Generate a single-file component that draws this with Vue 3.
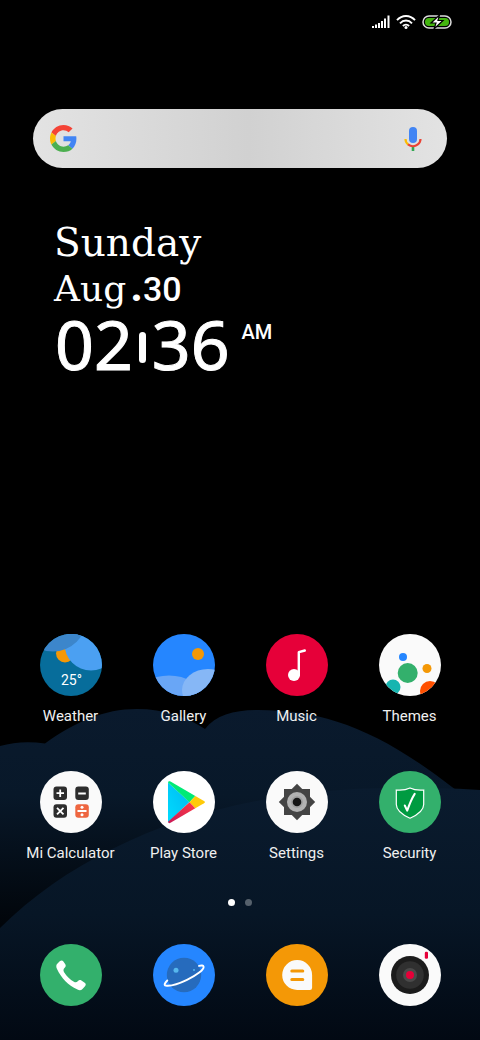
<script setup>
import { ref } from 'vue'

const query = ref('')
const page = ref(0)
const pages = [0, 1]
</script>

<template>
  <div class="home">
    <svg class="wallpaper" viewBox="0 700 480 340" preserveAspectRatio="none" aria-hidden="true">
      <defs>
        <linearGradient id="hill-back" gradientUnits="userSpaceOnUse" x1="0" y1="709" x2="0" y2="925">
          <stop offset="0" stop-color="#0a1a2d" />
          <stop offset="0.4" stop-color="#081829" />
          <stop offset="1" stop-color="#01050a" />
        </linearGradient>
        <linearGradient id="hill-front" gradientUnits="userSpaceOnUse" x1="0" y1="788" x2="0" y2="1040">
          <stop offset="0" stop-color="#0a1b2e" />
          <stop offset="0.5" stop-color="#071626" />
          <stop offset="1" stop-color="#020913" />
        </linearGradient>
      </defs>
      <path
        d="M0 746C14 742 29 741 45 743.500C75 722 104 709 137 709C164 709 187 717 205 729C216 715 234 710 258 710C322 710 376 728 452 787L470 800V1040H0Z"
        fill="url(#hill-back)"
      />
      <path d="M0 928C90 839 230 788 395 788C424 788 452 788 480 790V1040H0Z" fill="url(#hill-front)" />
    </svg>

    <header class="status">
      <svg width="18" height="14" viewBox="0 0 18 14" fill="#fff" aria-label="Signal">
        <path d="M0 11h2v2H0zM3 9.500h2V13H3zM6 8h2v5H6zM9 6h2v7H9zM12 3.500h2V13h-2zM15.500 .5h2V13h-2z" />
      </svg>
      <svg width="20" height="14" viewBox="0 0 20 14" fill="none" stroke="#fff" stroke-width="1.900" aria-label="Wi-Fi">
        <path d="M1 5.200C6-.4 14-.4 19 5.200M4 8.300c3.400-3.700 8.600-3.700 12 0M6.900 11c1.800-1.900 4.400-1.900 6.200 0" />
        <circle cx="10" cy="12.400" r="1.500" fill="#fff" stroke="none" />
      </svg>
      <svg width="30" height="14" viewBox="0 0 30 14" aria-label="Battery charging">
        <rect x="1" y="1" width="28" height="12" rx="6" fill="#000" stroke="#ddd" stroke-width="1.500" />
        <rect x="3" y="3" width="24" height="8" rx="4" fill="#43b50f" />
        <path d="M17.500 0L9 8h5l-2 6 9-8.500h-5z" fill="#fff" stroke="#000" stroke-width="1.200" />
      </svg>
    </header>

    <form class="search" role="search" @submit.prevent>
      <svg width="27" height="27" viewBox="0 0 48 48" aria-hidden="true">
        <path fill="#f44336" d="M24 9.500c3.540 0 6.710 1.220 9.210 3.600l6.850-6.850C35.900 2.380 30.470 0 24 0 14.620 0 6.510 5.380 2.560 13.220l7.980 6.190C12.430 13.720 17.740 9.500 24 9.500z" />
        <path fill="#4285f4" d="M46.980 24.550c0-1.570-.15-3.090-.38-4.550H24v9.020h12.940c-.58 2.960-2.260 5.480-4.780 7.180l7.730 6c4.510-4.180 7.090-10.360 7.090-17.650z" />
        <path fill="#fbbc05" d="M10.530 28.590c-.48-1.450-.76-2.990-.76-4.590s.27-3.140.76-4.590l-7.980-6.190C.92 16.460 0 20.120 0 24s.92 7.540 2.560 10.780l7.970-6.190z" />
        <path fill="#4caf50" d="M24 48c6.480 0 11.930-2.130 15.890-5.810l-7.730-6c-2.150 1.450-4.920 2.300-8.160 2.300-6.260 0-11.570-4.220-13.470-9.910l-7.980 6.190C6.510 42.620 14.620 48 24 48z" />
      </svg>
      <input v-model="query" type="text" aria-label="Search" />
      <button type="button" aria-label="Voice search">
        <svg width="18" height="26" viewBox="0 0 18 26" fill="none" stroke-width="2.200">
          <rect x="5" y="1" width="8" height="16" rx="4" fill="#4285f4" />
          <path d="M9 21v4" stroke="#34a853" stroke-width="2.600" />
          <path d="M1.500 13c0 2.400 1.100 4.300 2.700 5.500" stroke="#fbbc05" />
          <path d="M4 18.400c3 2.300 7 2.300 9.800 0 1.700-1.300 2.700-3.100 2.700-5.400" stroke="#ea4335" />
        </svg>
      </button>
    </form>

    <section class="clock">
      <div class="day">Sunday</div>
      <div class="date">Aug<b><span class="point">.</span>30</b></div>
      <div class="time">
        <span>02</span>
        <i class="tick"></i>
        <span>36</span>
        <small>AM</small>
      </div>
    </section>

    <main class="apps">
      <button type="button" class="app">
        <svg class="icon" viewBox="0 0 62 62">
          <clipPath id="disc"><circle cx="31" cy="31" r="31" /></clipPath>
          <g clip-path="url(#disc)">
            <path fill="#076d9b" d="M0 0h62v62H0z" />
            <circle cx="25" cy="19.500" r="9" fill="#f49806" />
            <circle cx="51" cy="10" r="26.500" fill="#4ba0f2" />
            <circle cx="13" cy="-16" r="33.500" fill="#3c86cb" />
            <text x="21" y="51" class="degrees">25°</text>
          </g>
        </svg>
        <span>Weather</span>
      </button>

      <button type="button" class="app">
        <svg class="icon" viewBox="0 0 62 62">
          <g clip-path="url(#disc)">
            <path fill="#2586ff" d="M0 0h62v62H0z" />
            <circle cx="45" cy="20" r="6" fill="#f49806" />
            <ellipse cx="16" cy="62" rx="32" ry="20.500" fill="#69a6f6" />
            <ellipse cx="55" cy="56" rx="26" ry="21" fill="#86b7f6" />
          </g>
        </svg>
        <span>Gallery</span>
      </button>

      <button type="button" class="app">
        <svg class="icon" viewBox="0 0 62 62">
          <circle cx="31" cy="31" r="31" fill="#e60039" />
          <circle cx="28" cy="41" r="6" fill="#fff" />
          <path d="M32.800 41V18.200l6-1.700" fill="none" stroke="#fff" stroke-width="2.400" stroke-linecap="round" stroke-linejoin="round" />
        </svg>
        <span>Music</span>
      </button>

      <button type="button" class="app">
        <svg class="icon" viewBox="0 0 62 62">
          <g clip-path="url(#disc)">
            <path fill="#fafafa" d="M0 0h62v62H0z" />
            <circle cx="24" cy="23" r="4" fill="#2586ff" />
            <circle cx="28.700" cy="39" r="10" fill="#33b06c" />
            <circle cx="48" cy="34.500" r="4.500" fill="#f49806" />
            <circle cx="14" cy="53" r="7.500" fill="#17b5b0" />
            <circle cx="51" cy="57" r="10" fill="#ff5000" />
          </g>
        </svg>
        <span>Themes</span>
      </button>

      <button type="button" class="app">
        <svg class="icon" viewBox="0 0 62 62">
          <circle cx="31" cy="31" r="31" fill="#fafafa" />
          <g fill="#2d2d2d">
            <rect x="13.500" y="15.500" width="13.500" height="13.500" rx="3" />
            <rect x="35.300" y="15.500" width="13.500" height="13.500" rx="3" />
            <rect x="13.500" y="33.300" width="13.500" height="13.500" rx="3" />
            <rect x="35.300" y="33.300" width="13.500" height="13.500" rx="3" fill="#ee6640" />
          </g>
          <path
            d="M16.500 22.200h7.500M20.200 18.500V26M38.200 22.500h7.600M17 36.800l6.500 6.500M23.500 36.800L17 43.300M37.500 40h9"
            stroke="#fff"
            stroke-width="1.800"
          />
          <circle cx="42" cy="36.300" r="1.500" fill="#fff" />
          <circle cx="42" cy="43.700" r="1.500" fill="#fff" />
        </svg>
        <span>Mi Calculator</span>
      </button>

      <button type="button" class="app">
        <svg class="icon" viewBox="0 0 62 62">
          <defs>
            <linearGradient id="play-blue" x1="1" y1="0" x2="0" y2="1">
              <stop offset="0" stop-color="#00b8f0" />
              <stop offset="1" stop-color="#00dcff" />
            </linearGradient>
            <linearGradient id="play-red" x1="1" y1="0" x2="0" y2="1">
              <stop offset="0" stop-color="#ff3a44" />
              <stop offset="1" stop-color="#c81a58" />
            </linearGradient>
          </defs>
          <circle cx="31" cy="31" r="31" fill="#fff" />
          <path d="M15 11.500L36.500 31 15 51.500z" fill="url(#play-blue)" />
          <path d="M15 11.500c.2-1.300 1.300-1.600 2.500-1L42.300 25l-5.800 6.200z" fill="#00ea76" />
          <path d="M42.300 25l8.700 4.900c1.200.7 1.200 1.700 0 2.400l-8.700 5-5.800-6.100z" fill="#ffca08" />
          <path d="M15 50.800l21.500-19.600 5.800 6.100-24.800 14.500c-1.200.7-2.300.3-2.500-1z" fill="url(#play-red)" />
        </svg>
        <span>Play Store</span>
      </button>

      <button type="button" class="app">
        <svg class="icon" viewBox="0 0 62 62">
          <circle cx="31" cy="31" r="31" fill="#fafafa" />
          <path d="M18 18h26v26H18z" fill="#444" />
          <path d="M31 12.800L49.200 31 31 49.200 12.800 31z" fill="#444" />
          <circle cx="31" cy="31" r="10" fill="#b2b2b2" />
          <circle cx="31" cy="31" r="6" fill="#a0a0a0" />
          <circle cx="31" cy="31" r="4.300" fill="#151515" />
        </svg>
        <span>Settings</span>
      </button>

      <button type="button" class="app">
        <svg class="icon" viewBox="0 0 62 62">
          <circle cx="31" cy="31" r="31" fill="#33b06c" />
          <path
            d="M17.300 19c5.200.4 9.700 0 13.700-2 4 2 8.500 2.400 13.700 2v14.500c0 6-6.500 10.500-13.700 13.700-7.200-3.200-13.700-7.700-13.700-13.700z"
            fill="#009b41"
            stroke="#fff"
            stroke-width="1.200"
          />
          <path d="M25.800 34.500l2.400 5.200c2-5.800 4-11.300 7.500-16.800" fill="none" stroke="#fff" stroke-width="2" stroke-linecap="round" stroke-linejoin="round" />
        </svg>
        <span>Security</span>
      </button>
    </main>

    <nav class="dots" aria-label="Pages">
      <button
        v-for="p in pages"
        :key="p"
        type="button"
        :class="{ active: p === page }"
        :aria-label="`Page ${p + 1}`"
        @click="page = p"
      />
    </nav>

    <footer class="dock">
      <button type="button" class="app" aria-label="Phone">
        <svg class="icon" viewBox="0 0 62 62">
          <circle cx="31" cy="31" r="31" fill="#33b06c" />
          <path
            d="M17.500 19.500l2.500-2.400c1.200-1 2.500-.9 3.400.3l1.900 2.800c.8 1.400.4 2.500-.6 3.600-1.500 1.500-1.500 2.700-.6 4.400 2.700 4.200 6 7.300 9.800 9.600 1.600.9 2.800.7 4.100-.8 1-1 2.100-1.200 3.400-.4l3.300 2.200c1.300.9 1.400 2.200.3 3.400l-2.500 2.700c-1.300 1.400-3 1.600-5 .7-9.700-4.600-16.200-11.400-20.600-20.800-1-2.200-.8-4 .6-5.300z"
            fill="#fff"
          />
        </svg>
      </button>
      <button type="button" class="app" aria-label="Browser">
        <svg class="icon" viewBox="0 0 62 62">
          <circle cx="31" cy="31" r="31" fill="#2586ff" />
          <circle cx="31" cy="31" r="17.200" fill="#266bbd" />
          <circle cx="23" cy="26.300" r="2.500" fill="#56b7ee" />
          <circle cx="41" cy="26" r="1" fill="#56b7ee" />
          <path
            d="M14.300 36.500c-2.600 2.500-3.600 4.700-1.500 5.100 4 .7 13.500-2 21.200-5.700 9.700-4.600 17.300-10.400 16.600-13.300-.3-1.200-2-1.400-4.600-.7"
            fill="none"
            stroke="#fff"
            stroke-width="1.900"
            stroke-linecap="round"
          />
        </svg>
      </button>
      <button type="button" class="app" aria-label="Messages">
        <svg class="icon" viewBox="0 0 62 62">
          <circle cx="31" cy="31" r="31" fill="#f49806" />
          <path d="M31.200 16A14.900 14.900 0 0 1 46.100 31v12.800a2.200 2.200 0 0 1-2.200 2.200H31.200a15 15 0 0 1 0-30z" fill="#fafafa" />
          <path d="M25.800 26.900h11M25.800 35.400h11" stroke="#f49806" stroke-width="3" stroke-linecap="round" />
        </svg>
      </button>
      <button type="button" class="app" aria-label="Camera">
        <svg class="icon" viewBox="0 0 62 62">
          <circle cx="31" cy="31" r="31" fill="#fafafa" />
          <circle cx="31" cy="31" r="19" fill="#1c1c1c" />
          <circle cx="31" cy="31" r="13.800" fill="#303030" />
          <circle cx="31" cy="31" r="7" fill="#4a4a4a" />
          <circle cx="31" cy="31" r="4" fill="#e60039" />
          <rect x="45.800" y="7.800" width="3.200" height="7" rx="1.200" fill="#e60039" />
        </svg>
      </button>
    </footer>
  </div>
</template>

<style>
body {
  margin: 0;
  background: #000;
}
</style>

<style scoped>
.home {
  position: relative;
  box-sizing: border-box;
  min-height: 100vh;
  display: flex;
  flex-direction: column;
  padding-bottom: 34px;
  overflow: hidden;
  background: #000;
  color: #fff;
  font-family: Roboto, sans-serif;
}
.home > * {
  position: relative;
}
button {
  padding: 0;
  border: 0;
  background: none;
  color: inherit;
  font: inherit;
  cursor: pointer;
}
svg {
  display: block;
  flex: none;
}

/* 배경 언덕 */
.home > .wallpaper {
  position: absolute;
  left: 0;
  bottom: 0;
  width: 100%;
  height: 340px;
}

.status {
  display: flex;
  justify-content: flex-end;
  align-items: center;
  gap: 6px;
  height: 44px;
  padding: 0 28px;
}

.search {
  display: flex;
  align-items: center;
  box-sizing: border-box;
  height: 59px;
  margin: 65px 33px 0;
  padding: 0 25px 0 17px;
  border-radius: 30px;
  background: linear-gradient(90deg, #e3e3e3, #d1d1d1 52%, #e3e3e3);
}
.search input {
  flex: 1;
  min-width: 0;
  border: 0;
  outline: 0;
  padding: 0 16px;
  background: transparent;
  font: 18px Roboto, sans-serif;
}

.clock {
  padding: 52px 54px 0;
}
.day,
.date {
  font-family: 'DejaVu Serif', serif;
  font-size: 39px;
  line-height: 46px;
}
.date {
  font-size: 36px;
}
.date b {
  margin-left: 4px;
  font-family: Roboto, sans-serif;
  font-size: 34px;
  font-weight: 500;
}
.date .point {
  font-size: 44px;
  font-weight: 700;
  line-height: 34px;
}
.time {
  display: flex;
  align-items: flex-start;
  padding-left: 1px;
  font-family: 'Noto Sans', sans-serif;
  font-size: 68px;
  line-height: 64px;
  -webkit-text-stroke: 1px #fff;
}
.tick {
  width: 7px;
  height: 31px;
  margin: 20px 6px 0;
  border-radius: 4px;
  background: #fff;
}
.time small {
  margin-left: 12px;
  font-family: Roboto, sans-serif;
  font-size: 20px;
  font-weight: 500;
  line-height: 40px;
  -webkit-text-stroke: 0;
}

.apps,
.dock {
  display: grid;
  grid-template-columns: repeat(4, 1fr);
  padding: 0 14px;
}
.apps {
  row-gap: 45px;
  margin-top: auto;
}
.app {
  display: flex;
  flex-direction: column;
  align-items: center;
  gap: 10px;
  font-size: 15px;
  line-height: 20px;
  white-space: nowrap;
}
.app span {
  color: #f0f0f0;
}
.icon {
  width: 62px;
  height: 62px;
}
.degrees {
  font-size: 14px;
  fill: #fff;
}

.dots {
  display: flex;
  justify-content: center;
  gap: 10px;
  margin: 36px 0 38px;
}
.dots button {
  width: 7px;
  height: 7px;
  border-radius: 50%;
  background: #56616c;
}
.dots .active {
  background: #fff;
}
</style>
